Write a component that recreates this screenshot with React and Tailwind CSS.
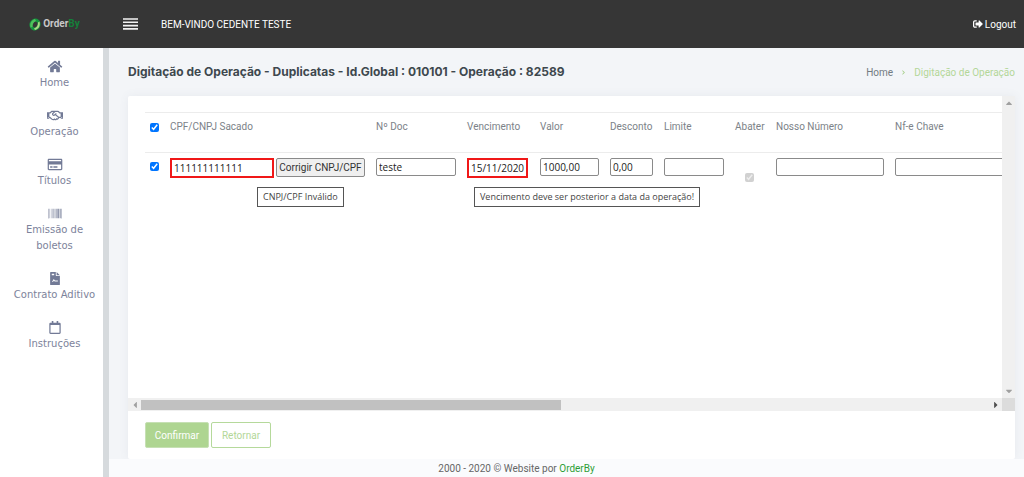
import React from "react";
import {
  FaHome,
  FaRegHandshake,
  FaRegCreditCard,
  FaBarcode,
  FaRegCalendar,
  FaSignOutAlt,
  FaChevronRight,
  FaCaretUp,
  FaCaretDown,
  FaCaretLeft,
  FaCaretRight,
} from "react-icons/fa";

const menu = [
  { label: "Home", icon: FaHome },
  { label: "Operação", icon: FaRegHandshake },
  { label: "Títulos", icon: FaRegCreditCard },
  { label: "Emissão de boletos", icon: FaBarcode },
  { label: "Contrato Aditivo", icon: ContractIcon },
  { label: "Instruções", icon: FaRegCalendar },
];

const columns = [
  { label: "CPF/CNPJ Sacado", width: "w-[206px]" },
  { label: "Nº Doc", width: "w-[91px]" },
  { label: "Vencimento", width: "w-[73px]" },
  { label: "Valor", width: "w-[70px]" },
  { label: "Desconto", width: "w-[54px]" },
  { label: "Limite", width: "w-[71px]" },
  { label: "Abater", width: "w-[41px]" },
  { label: "Nosso Número", width: "w-[119px]" },
  { label: "Nf-e Chave", width: "w-[300px]" },
];

function ContractIcon({ className }) {
  return (
    <svg className={className} viewBox="0 0 384 512" fill="currentColor" aria-hidden>
      <path
        fillRule="evenodd"
        d="M224 136V0H24C11 0 0 11 0 24v464c0 13 11 24 24 24h336c13 0 24-11 24-24V160H248c-13 0-24-11-24-24zM64 64h96v64H64V64zm16 296c30-10 45-54 64-80 22 20 28 52 56 56h104v40H192c-20 0-32-14-44-30-14 24-30 46-68 46v-32zM256 0v128h128L256 0z"
      />
    </svg>
  );
}

function Logo() {
  return (
    <a href="#" className="flex items-center gap-[2px] text-[10px] leading-4 font-bold">
      <svg className="h-[13px] w-3" viewBox="0 0 24 26" fill="none" aria-hidden>
        <ellipse cx="12" cy="13" rx="8" ry="9" stroke="#16963f" strokeWidth="6" transform="rotate(20 12 13)" />
        <path d="M3 19C1 11 5 4 12 2l2 4C9 8 7 12 7 18z" fill="#4fc15c" />
        <path d="M21 7c2 8-1 15-9 17l-2-3c6-2 8-6 8-12z" fill="#a9d983" />
      </svg>
      <span className="text-[#c8c8c8]">
        Order<span className="text-[#14803a]">By</span>
      </span>
    </a>
  );
}

function Field({ label, className = "", invalid = false, value = "" }) {
  return (
    <input
      type="text"
      aria-label={label}
      defaultValue={value}
      className={`block bg-white pl-[2px] font-['Open_Sans',sans-serif] text-[10px] leading-3 text-[#222] ${
        invalid ? "h-5 border-2 border-[#f01818]" : "h-[18px] rounded-[2px] border border-[#8a8a8a]"
      } ${className}`}
    />
  );
}

function Check({ label, disabled = false }) {
  return (
    <input type="checkbox" aria-label={label} defaultChecked disabled={disabled} className="block size-[9px]" />
  );
}

function Tip({ children, className }) {
  return (
    <div
      role="tooltip"
      className={`absolute z-10 border border-[#555] bg-white px-[5px] font-['Open_Sans',sans-serif] text-[9px] leading-[18px] whitespace-nowrap text-[#444] ${className}`}
    >
      {children}
    </div>
  );
}

function Sidebar() {
  return (
    <aside className="w-[109px] shrink-0 border-r-[6px] border-[#d6dadd] bg-white">
      <nav className="flex flex-col gap-[18px] pt-3 font-['DejaVu_Sans',sans-serif] text-[10px] leading-4 text-[#7d839b]">
        {menu.map(({ label, icon: Icon }) => (
          <a key={label} href="#" className="flex flex-col items-center gap-[2px] pl-[6px] text-center">
            <Icon className="h-[13px] w-4 text-[#727a96]" />
            <span className="max-w-[90px]">{label}</span>
          </a>
        ))}
      </nav>
    </aside>
  );
}

function OperationTable() {
  return (
    <div className="h-[302px] min-w-0 flex-1 overflow-hidden pt-4 pl-[17px]">
      <table className="w-[1046px] table-fixed border-collapse text-[10px]">
        <thead>
          <tr className="h-10 border-y border-[#ececec] align-top text-[#7c8288]">
            <th className="w-[21px] pt-[10px] pl-[5px]">
              <Check label="Selecionar todos" />
            </th>
            {columns.map((c) => (
              <th key={c.label} className={`pt-[6px] pl-1 text-left leading-4 font-normal whitespace-nowrap ${c.width}`}>
                {c.label}
              </th>
            ))}
          </tr>
        </thead>
        <tbody>
          <tr className="align-top [&>td]:pt-[5px] [&>td]:pl-1">
            <td>
              <div className="pt-1 pl-px">
                <Check label="Selecionar título" />
              </div>
            </td>
            <td>
              <div className="relative flex gap-[2px]">
                <Field label="CPF/CNPJ Sacado" value="111111111111" invalid className="w-[104px]" />
                <button
                  type="button"
                  className="h-[19px] w-[89px] rounded-[2px] border border-[#8a8a8a] bg-[#efefef] text-[10px] leading-4 whitespace-nowrap text-[#333]"
                >
                  Corrigir CNPJ/CPF
                </button>
                <Tip className="top-[29px] left-[87px]">CNPJ/CPF Inválido</Tip>
              </div>
            </td>
            <td><Field label="Nº Doc" value="teste" className="w-20" /></td>
            <td>
              <div className="relative">
                <Field label="Vencimento" value="15/11/2020" invalid className="w-[61px]" />
                <Tip className="top-[29px] left-[7px]">Vencimento deve ser posterior a data da operação!</Tip>
              </div>
            </td>
            <td><Field label="Valor" value="1000,00" className="w-[59px]" /></td>
            <td><Field label="Desconto" value="0,00" className="w-[43px]" /></td>
            <td><Field label="Limite" className="w-[60px]" /></td>
            <td>
              <div className="pt-[15px] pl-[10px]">
                <Check label="Abater" disabled />
              </div>
            </td>
            <td><Field label="Nosso Número" className="w-[108px]" /></td>
            <td><Field label="Nf-e Chave" className="w-[280px]" /></td>
          </tr>
        </tbody>
      </table>
    </div>
  );
}

export default function App() {
  return (
    <div className="flex min-h-screen flex-col bg-[#f3f5f8] font-['Roboto',sans-serif] text-[10px]">
      <header className="flex h-12 items-center bg-[#363636] pr-2 text-white">
        <div className="flex w-[109px] justify-center">
          <Logo />
        </div>
        <button type="button" aria-label="Menu" className="ml-[14px]">
          <svg className="h-3 w-[15px]" viewBox="0 0 15 12" stroke="#f2f2f2" strokeWidth="1.6" aria-hidden>
            <path d="M0 1h15M0 4.3h15M0 7.6h15M0 10.9h15" />
          </svg>
        </button>
        <span className="ml-[23px]">BEM-VINDO CEDENTE TESTE</span>
        <a href="#" className="ml-auto flex items-center gap-[2px]">
          <FaSignOutAlt className="size-[10px]" />
          Logout
        </a>
      </header>

      <div className="flex flex-1">
        <Sidebar />
        <div className="flex min-w-0 flex-1 flex-col">
          <main className="pr-[9px] pl-[19px]">
            <div className="flex h-12 items-center justify-between">
              <h1 className="font-['Inter',sans-serif] text-[12px] font-bold text-[#3e484e]">
                Digitação de Operação - Duplicatas - Id.Global : 010101 - Operação : 82589
              </h1>
              <nav aria-label="Breadcrumb" className="flex items-center gap-2">
                <a href="#" className="text-[#727b82]">Home</a>
                <FaChevronRight className="size-[5px] text-[#a5cf87]" />
                <span className="text-[#b3d798]">Digitação de Operação</span>
              </nav>
            </div>

            <section className="rounded-[2px] bg-white shadow-[0_0_10px_rgba(90,100,130,0.08)]">
              <div className="flex">
                <OperationTable />
                <div className="flex w-[13px] flex-col items-center justify-between bg-[#f0f0f0] py-[2px] text-[#a0a0a0]">
                  <FaCaretUp className="size-[10px]" />
                  <FaCaretDown className="size-[10px]" />
                </div>
              </div>
              <div className="flex h-[13px] bg-[#f0f0f0]">
                <div className="flex w-[13px] items-center justify-center text-[#a0a0a0]">
                  <FaCaretLeft className="size-[10px]" />
                </div>
                <div className="flex flex-1 items-center">
                  <div className="h-[10px] w-[49.5%] bg-[#c1c1c1]" />
                </div>
                <div className="flex w-[13px] items-center justify-center text-[#505050]">
                  <FaCaretRight className="size-[10px]" />
                </div>
                <div className="w-[13px] bg-[#dcdcdc]" />
              </div>
              <div className="flex gap-[2px] px-[17px] pt-[11px] pb-[11px]">
                <button type="button" className="h-[26px] w-16 rounded-[2px] border border-[#c6e0b4] bg-[#aed591] text-white">
                  Confirmar
                </button>
                <button type="button" className="h-[26px] w-[60px] rounded-[2px] border border-[#b5d99b] bg-white text-[#b3d798]">
                  Retornar
                </button>
              </div>
            </section>
          </main>
          <footer className="flex-1 bg-[#fafbfd] text-center leading-5 text-[#666]">
            <p className="pr-[100px]">
              2000 - 2020 © Website por <a href="#" className="text-[#2f9e35]">OrderBy</a>
            </p>
          </footer>
        </div>
      </div>
    </div>
  );
}
